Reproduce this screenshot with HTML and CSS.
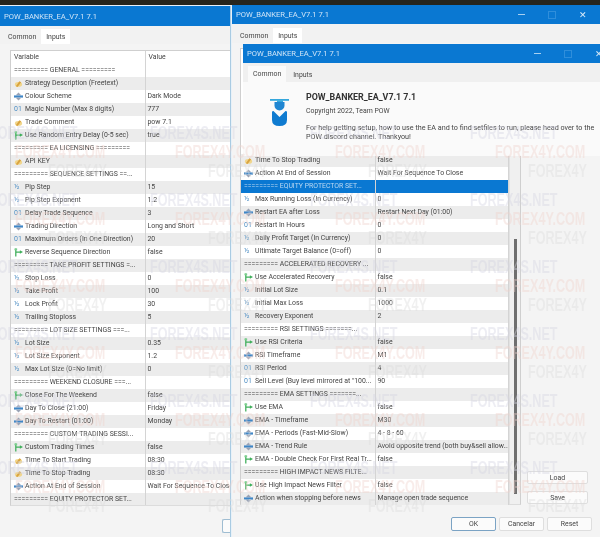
FILE: index.html
```html
<!DOCTYPE html>
<html lang="en">
<head>
    <meta charset="UTF-8">
    <meta name="viewport" content="width=device-width, initial-scale=1.0">
    <title>POW_BANKER_EA_V7.1 7.1</title>
    <link rel="stylesheet" href="styles.css">
</head>
<body>
    <svg class="defs" width="0" height="0">
        <symbol id="i-str" viewBox="0 0 10 10"><ellipse cx="5" cy="6" rx="4" ry="2.6" fill="#f1d68c"/><path d="M2 8 L6 2.5 L8 3.5 L4 9z" fill="#d9a441"/></symbol>
        <symbol id="i-enum" viewBox="0 0 10 10"><path d="M5 .5 L8 3.5 H2z" fill="#9aa3b5"/><rect x="0" y="3.8" width="10" height="2.4" fill="#3f86c6"/><path d="M5 9.5 L8 6.5 H2z" fill="#9aa3b5"/></symbol>
        <symbol id="i-bool" viewBox="0 0 10 10"><path d="M2 .5 V9.5 M2 4.5 H7" stroke="#3fae5a" stroke-width="1.4" fill="none"/><path d="M6.5 2.5 L10 4.5 L6.5 6.5z" fill="#3fae5a"/><rect x=".5" y=".5" width="3" height="2" fill="#7ccf8e"/></symbol>
    </svg>

    <div class="desk">
        <section class="win win-back">
            <header class="title"><span>POW_BANKER_EA_V7.1 7.1</span></header>
            <nav class="tabs">
                <span class="tab">Common</span>
                <span class="tab active">Inputs</span>
            </nav>
            <div class="frame frame-back">
                <table class="grid">
                    <tr class="head"><td>Variable</td><td>Value</td></tr>
                    <tr class="sec"><td>========= GENERAL =========</td><td></td></tr>
                    <tr><td><svg class="ic"><use href="#i-str"/></svg>Strategy Description (Freetext)</td><td></td></tr>
                    <tr><td><svg class="ic"><use href="#i-enum"/></svg>Colour Scheme</td><td>Dark Mode</td></tr>
                    <tr><td><span class="ic-t">01</span>Magic Number (Max 8 digits)</td><td>777</td></tr>
                    <tr><td><svg class="ic"><use href="#i-str"/></svg>Trade Comment</td><td>pow 7.1</td></tr>
                    <tr><td><svg class="ic"><use href="#i-bool"/></svg>Use Random Entry Delay (0-5 sec)</td><td>true</td></tr>
                    <tr class="sec"><td>========= EA LICENSING =========</td><td></td></tr>
                    <tr><td><svg class="ic"><use href="#i-str"/></svg>API KEY</td><td></td></tr>
                    <tr class="sec"><td>========= SEQUENCE SETTINGS ==...</td><td></td></tr>
                    <tr><td><span class="ic-t">½</span>Pip Step</td><td>15</td></tr>
                    <tr><td><span class="ic-t">½</span>Pip Step Exponent</td><td>1.2</td></tr>
                    <tr><td><span class="ic-t">01</span>Delay Trade Sequence</td><td>3</td></tr>
                    <tr><td><svg class="ic"><use href="#i-enum"/></svg>Trading Direction</td><td>Long and Short</td></tr>
                    <tr><td><span class="ic-t">01</span>Maximum Orders (In One Direction)</td><td>20</td></tr>
                    <tr><td><svg class="ic"><use href="#i-bool"/></svg>Reverse Sequence Direction</td><td>false</td></tr>
                    <tr class="sec"><td>========= TAKE PROFIT SETTINGS =...</td><td></td></tr>
                    <tr><td><span class="ic-t">½</span>Stop Loss</td><td>0</td></tr>
                    <tr><td><span class="ic-t">½</span>Take Profit</td><td>100</td></tr>
                    <tr><td><span class="ic-t">½</span>Lock Profit</td><td>30</td></tr>
                    <tr><td><span class="ic-t">½</span>Trailing Stoploss</td><td>5</td></tr>
                    <tr class="sec"><td>========= LOT SIZE SETTINGS ===...</td><td></td></tr>
                    <tr><td><span class="ic-t">½</span>Lot Size</td><td>0.35</td></tr>
                    <tr><td><span class="ic-t">½</span>Lot Size Exponent</td><td>1.2</td></tr>
                    <tr><td><span class="ic-t">½</span>Max Lot Size (0=No limit)</td><td>0</td></tr>
                    <tr class="sec"><td>========= WEEKEND CLOSURE ===...</td><td></td></tr>
                    <tr><td><svg class="ic"><use href="#i-bool"/></svg>Close For The Weekend</td><td>false</td></tr>
                    <tr><td><svg class="ic"><use href="#i-enum"/></svg>Day To Close (21:00)</td><td>Friday</td></tr>
                    <tr><td><svg class="ic"><use href="#i-enum"/></svg>Day To Restart (01:00)</td><td>Monday</td></tr>
                    <tr class="sec"><td>========= CUSTOM TRADING SESSI...</td><td></td></tr>
                    <tr><td><svg class="ic"><use href="#i-bool"/></svg>Custom Trading Times</td><td>false</td></tr>
                    <tr><td><svg class="ic"><use href="#i-str"/></svg>Time To Start Trading</td><td>08:30</td></tr>
                    <tr><td><svg class="ic"><use href="#i-str"/></svg>Time To Stop Trading</td><td>08:30</td></tr>
                    <tr><td><svg class="ic"><use href="#i-enum"/></svg>Action At End of Session</td><td>Wait For Sequence To Close</td></tr>
                    <tr class="sec"><td>========= EQUITY PROTECTOR SET...</td><td></td></tr>
                </table>
            </div>
            <div class="sliver"></div>
        </section>

        <section class="win win-mid">
            <header class="title">
                <span>POW_BANKER_EA_V7.1 7.1</span>
                <div class="ctrls">
                    <i class="c-min"></i><i class="c-max"></i><i class="c-x">✕</i>
                </div>
            </header>
            <nav class="tabs">
                <span class="tab">Common</span>
                <span class="tab active">Inputs</span>
            </nav>
            <div class="main">
                <div class="frame frame-mid">
                    <table class="grid">
                        <tr><td><svg class="ic"><use href="#i-str"/></svg>Time To Stop Trading</td><td>false</td></tr>
                        <tr><td><svg class="ic"><use href="#i-enum"/></svg>Action At End of Session</td><td>Wait For Sequence To Close</td></tr>
                        <tr class="sec selected"><td>========= EQUITY PROTECTOR SET...</td><td></td></tr>
                        <tr><td><span class="ic-t">½</span>Max Running Loss (In Currency)</td><td>0</td></tr>
                        <tr><td><svg class="ic"><use href="#i-enum"/></svg>Restart EA after Loss</td><td>Restart Next Day (01:00)</td></tr>
                        <tr><td><span class="ic-t">01</span>Restart In Hours</td><td>0</td></tr>
                        <tr><td><span class="ic-t">½</span>Daily Profit Target (In Currency)</td><td>0</td></tr>
                        <tr><td><span class="ic-t">½</span>Ultimate Target Balance (0=off)</td><td>0</td></tr>
                        <tr class="sec"><td>========= ACCELERATED RECOVERY ...</td><td></td></tr>
                        <tr><td><svg class="ic"><use href="#i-bool"/></svg>Use Accelerated Recovery</td><td>false</td></tr>
                        <tr><td><span class="ic-t">½</span>Initial Lot Size</td><td>0.1</td></tr>
                        <tr><td><span class="ic-t">½</span>Initial Max Loss</td><td>1000</td></tr>
                        <tr><td><span class="ic-t">½</span>Recovery Exponent</td><td>2</td></tr>
                        <tr class="sec"><td>========= RSI SETTINGS =======...</td><td></td></tr>
                        <tr><td><svg class="ic"><use href="#i-bool"/></svg>Use RSI Criteria</td><td>false</td></tr>
                        <tr><td><svg class="ic"><use href="#i-enum"/></svg>RSI Timeframe</td><td>M1</td></tr>
                        <tr><td><span class="ic-t">01</span>RSI Period</td><td>4</td></tr>
                        <tr><td><span class="ic-t">01</span>Sell Level (Buy level mirrored at "100...</td><td>90</td></tr>
                        <tr class="sec"><td>========= EMA SETTINGS =======...</td><td></td></tr>
                        <tr><td><svg class="ic"><use href="#i-bool"/></svg>Use EMA</td><td>false</td></tr>
                        <tr><td><svg class="ic"><use href="#i-enum"/></svg>EMA - Timeframe</td><td>M30</td></tr>
                        <tr><td><svg class="ic"><use href="#i-enum"/></svg>EMA - Periods (Fast-Mid-Slow)</td><td>4 - 8 - 60</td></tr>
                        <tr><td><svg class="ic"><use href="#i-enum"/></svg>EMA - Trend Rule</td><td>Avoid opposite trend (both buy&amp;sell allow...</td></tr>
                        <tr><td><svg class="ic"><use href="#i-bool"/></svg>EMA - Double Check For First Real Tr...</td><td>false</td></tr>
                        <tr class="sec"><td>========= HIGH IMPACT NEWS FILTE...</td><td></td></tr>
                        <tr><td><svg class="ic"><use href="#i-bool"/></svg>Use High Impact News Filter</td><td>false</td></tr>
                        <tr><td><svg class="ic"><use href="#i-enum"/></svg>Action when stopping before news</td><td>Manage open trade sequence</td></tr>
                    </table>
                    <div class="track"><div class="thumb"></div></div>
                </div>
                <div class="side">
                    <button class="btn">Load</button>
                    <button class="btn">Save</button>
                </div>
            </div>
            <footer class="foot">
                <button class="btn btn-ok">OK</button>
                <button class="btn">Cancelar</button>
                <button class="btn">Reset</button>
            </footer>
        </section>

        <section class="win win-front">
            <header class="title">
                <span>POW_BANKER_EA_V7.1 7.1</span>
                <div class="ctrls">
                    <i class="c-min"></i><i class="c-max"></i><i class="c-x">✕</i>
                </div>
            </header>
            <nav class="tabs">
                <span class="tab active">Common</span>
                <span class="tab">Inputs</span>
            </nav>
            <div class="about">
                <svg class="logo" viewBox="0 0 20 30" width="20" height="30">
                    <rect x="0" y="0" width="19" height="1.8" fill="#35a7dc"/>
                    <rect x="7" y="1.5" width="6" height="1.5" fill="#35a7dc"/>
                    <path d="M4.5 3 H14.5 V6.5 A5 5 0 0 1 4.5 6.5z" fill="#1f86d2"/>
                    <path d="M2 13 Q2 12 3.5 12 L9.5 18 L15.5 12 Q17 12 17 13 V21 Q17 27 9.5 27 Q2 27 2 21z" fill="#0f7bd0"/>
                </svg>
                <div class="about-text">
                    <h1>POW_BANKER_EA_V7.1 7.1</h1>
                    <p class="copy">Copyright 2022, Team POW</p>
                    <p class="help">For help getting setup, how to use the EA and to find setfiles to run, please head over to the POW discord channel. Thankyou!</p>
                </div>
            </div>
        </section>

        <div class="marks">
            <div class="wm"><b>FOREX4S.NET</b><b>FOREX4Y.COM</b><b>FOREX4Y</b></div>
            <div class="wm"><b>FOREX4S.NET</b><b>FOREX4Y.COM</b><b>FOREX4Y</b></div>
            <div class="wm"><b>FOREX4S.NET</b><b>FOREX4Y.COM</b><b>FOREX4Y</b></div>
            <div class="wm"><b>FOREX4S.NET</b><b>FOREX4Y.COM</b><b>FOREX4Y</b></div>
            <div class="wm"><b>FOREX4S.NET</b><b>FOREX4Y.COM</b><b>FOREX4Y</b></div>
            <div class="wm"><b>FOREX4S.NET</b><b>FOREX4Y.COM</b><b>FOREX4Y</b></div>
            <div class="wm"><b>FOREX4S.NET</b><b>FOREX4Y.COM</b><b>FOREX4Y</b></div>
            <div class="wm"><b>FOREX4S.NET</b><b>FOREX4Y.COM</b><b>FOREX4Y</b></div>
            <div class="wm"><b>FOREX4S.NET</b><b>FOREX4Y.COM</b><b>FOREX4Y</b></div>
            <div class="wm"><b>FOREX4S.NET</b><b>FOREX4Y.COM</b><b>FOREX4Y</b></div>
            <div class="wm"><b>FOREX4S.NET</b><b>FOREX4Y.COM</b><b>FOREX4Y</b></div>
            <div class="wm"><b>FOREX4S.NET</b><b>FOREX4Y.COM</b><b>FOREX4Y</b></div>
            <div class="wm"><b>FOREX4S.NET</b><b>FOREX4Y.COM</b><b>FOREX4Y</b></div>
            <div class="wm"><b>FOREX4S.NET</b><b>FOREX4Y.COM</b><b>FOREX4Y</b></div>
            <div class="wm"><b>FOREX4S.NET</b><b>FOREX4Y.COM</b><b>FOREX4Y</b></div>
            <div class="wm"><b>FOREX4S.NET</b><b>FOREX4Y.COM</b><b>FOREX4Y</b></div>
            <div class="wm"><b>FOREX4S.NET</b><b>FOREX4Y.COM</b><b>FOREX4Y</b></div>
            <div class="wm"><b>FOREX4S.NET</b><b>FOREX4Y.COM</b><b>FOREX4Y</b></div>
            <div class="wm"><b>FOREX4S.NET</b><b>FOREX4Y.COM</b><b>FOREX4Y</b></div>
            <div class="wm"><b>FOREX4S.NET</b><b>FOREX4Y.COM</b><b>FOREX4Y</b></div>
            <div class="wm"><b>FOREX4S.NET</b><b>FOREX4Y.COM</b><b>FOREX4Y</b></div>
            <div class="wm"><b>FOREX4S.NET</b><b>FOREX4Y.COM</b><b>FOREX4Y</b></div>
            <div class="wm"><b>FOREX4S.NET</b><b>FOREX4Y.COM</b><b>FOREX4Y</b></div>
            <div class="wm"><b>FOREX4S.NET</b><b>FOREX4Y.COM</b><b>FOREX4Y</b></div>
        </div>
    </div>
</body>
</html>
```

FILE: styles.css
```css
html, body {
    margin: 0;
    padding: 0;
    background-color: #26251d;
}

.defs {
    position: absolute;
}

.desk {
    position: relative;
    width: 600px;
    height: 537px;
    overflow: hidden;
    background: linear-gradient(#26251d 5px, #e8f1f8 5px);
    font-family: Roboto, "Noto Sans", sans-serif;
    font-size: 6.9px;
    color: #454545;
    filter: blur(0.5px);
}

/* windows on the desktop */
.win {
    position: absolute;
    background-color: #f4f4f4;
    overflow: hidden;
}
.win-back {
    left: 0;
    top: 6px;
    width: 231px;
    height: 531px;
    border-right: 1px solid #a9cbe2;
    box-sizing: border-box;
}
.win-mid {
    left: 232px;
    top: 5px;
    width: 368px;
    height: 532px;
}
.win-front {
    left: 243px;
    top: 44px;
    width: 360px;
    height: 112px;
    background-color: #fafafa;
}

.title {
    display: flex;
    align-items: center;
    height: 20px;
    padding-left: 4px;
    background-color: #0a78d2;
    color: #cfe4f7;
    font-size: 7.6px;
}
.win-mid .title {
    height: 19px;
}
.win-front .title {
    height: 19px;
}
.ctrls {
    margin-left: auto;
    display: flex;
    align-items: center;
}
.ctrls i {
    display: block;
    font-style: normal;
}
.c-min {
    width: 7px;
    height: 1px;
    background-color: #a8d0f0;
}
.c-max {
    width: 6px;
    height: 6px;
    border: 1px solid #2f8edb;
    margin-left: 23px;
}
.c-x {
    margin-left: 23px;
    margin-right: 13px;
    color: #dcecf9;
    font-size: 9px;
}
.win-front .c-x {
    margin-right: 0;
    width: 8px;
}

.tabs {
    display: flex;
    align-items: flex-end;
    height: 18px;
    padding-left: 3px;
    background-color: #f2f2f2;
}
.win-mid .tabs {
    height: 19px;
}
.tab {
    padding: 0 5px 1px;
    line-height: 12px;
}
.tab.active {
    background-color: #fff;
    padding-top: 2px;
}
.win-front .tabs {
    height: 19px;
    padding-left: 5px;
    gap: 2px;
    background-color: #f0f0f0;
}
.win-front .tab.active {
    background-color: #fafafa;
    padding: 2px 5px 2px;
}

/* parameter tables */
.frame {
    background-color: #fff;
    border: 1px solid #cfcfcf;
    border-bottom-color: #dcdcdc;
}
.frame-back {
    box-sizing: border-box;
    margin: 6px 0 0 10px;
    width: 221px;
    height: 456px;
    border-right: none;
    overflow: hidden;
}
.frame-mid {
    display: flex;
    width: 281px;
    height: 457px;
    box-sizing: border-box;
    padding-top: 105px;
}
.grid {
    border-collapse: collapse;
    table-layout: fixed;
    width: 268px;
    flex: none;
}
.frame-back .grid {
    width: 220px;
}
.grid td {
    box-sizing: border-box;
    height: 13px;
    padding: 0 0 0 2px;
    line-height: 13px;
    white-space: nowrap;
    overflow: hidden;
    border-right: 1px solid #d4d4d4;
}
.grid td:first-child {
    width: 134px;
    padding-left: 14px;
    position: relative;
}
.grid tr:nth-child(odd) td {
    background-color: #ececec;
}
.grid tr.head td {
    background-color: #fff;
    padding-left: 3px;
}
.grid tr.sec td:first-child {
    padding-left: 3px;
}
.grid tr.selected td {
    background-color: #0a78d2;
    color: #bcd9f2;
}

.ic {
    position: absolute;
    left: 3px;
    top: 2px;
    width: 9px;
    height: 9px;
}
.ic-t {
    position: absolute;
    left: 3px;
    top: 0;
    color: #4f8fc4;
    font-size: 7px;
}

.track {
    flex: 1;
    background-color: #f0f0f0;
    border-left: 1px solid #e2e2e2;
}
.thumb {
    width: 3px;
    height: 255px;
    margin: 85px 0 0 4px;
    background-color: #6f6f6f;
}

.main {
    display: flex;
    margin: 5px 0 0 8px;
}
.side {
    display: flex;
    flex-direction: column;
    justify-content: flex-end;
    gap: 7px;
    margin: 0 0 1px 6px;
}
.side .btn {
    width: 61px;
    height: 13px;
}
.foot {
    display: flex;
    justify-content: flex-end;
    gap: 3px;
    margin-top: 12px;
    padding-right: 8px;
}
.btn {
    box-sizing: border-box;
    width: 45px;
    height: 14px;
    padding: 0;
    background-color: #fbfbfb;
    border: 1px solid #dedede;
    border-radius: 2px;
    font-family: inherit;
    font-size: 6.9px;
    color: #454545;
}
.btn-ok {
    border: 1px solid #7ba3c4;
}
.sliver {
    width: 10px;
    height: 14px;
    margin: 13px 0 0 222px;
    box-sizing: border-box;
    background-color: #fbfbfb;
    border: 1px solid #9fbdd2;
    border-right: none;
    border-radius: 2px;
}

/* about panel on the common tab */
.about {
    display: flex;
    padding: 9px 0 0 27px;
}
.logo {
    flex: none;
    margin-top: 8px;
}
.about-text {
    margin-left: 16px;
    width: 292px;
    line-height: 9px;
}
.about-text h1 {
    margin: 0;
    font-size: 8.9px;
    line-height: 12px;
    color: #333;
}
.about-text p {
    margin: 7px 0 0;
}
.about-text .copy {
    margin-top: 4px;
}
.about-text .help {
    font-size: 7.2px;
}

/* repeating forex site watermark */
.marks {
    position: absolute;
    left: -10px;
    top: 124px;
    display: grid;
    grid-template-columns: repeat(4, 160px);
    grid-auto-rows: 67px;
    font-family: "Liberation Sans", sans-serif;
    font-size: 18px;
    line-height: 19px;
    opacity: 0.4;
}
.wm {
    display: flex;
    flex-direction: column;
    align-items: flex-start;
    white-space: nowrap;
}
.wm b {
    transform: scaleX(0.7);
    transform-origin: left center;
}
.wm b:nth-child(1) {
    color: #d4d4e2;
}
.wm b:nth-child(2) {
    margin-left: 25px;
    color: #f0d2cb;
}
.wm b:nth-child(3) {
    margin-left: 58px;
    color: #dcdcdc;
}
```
